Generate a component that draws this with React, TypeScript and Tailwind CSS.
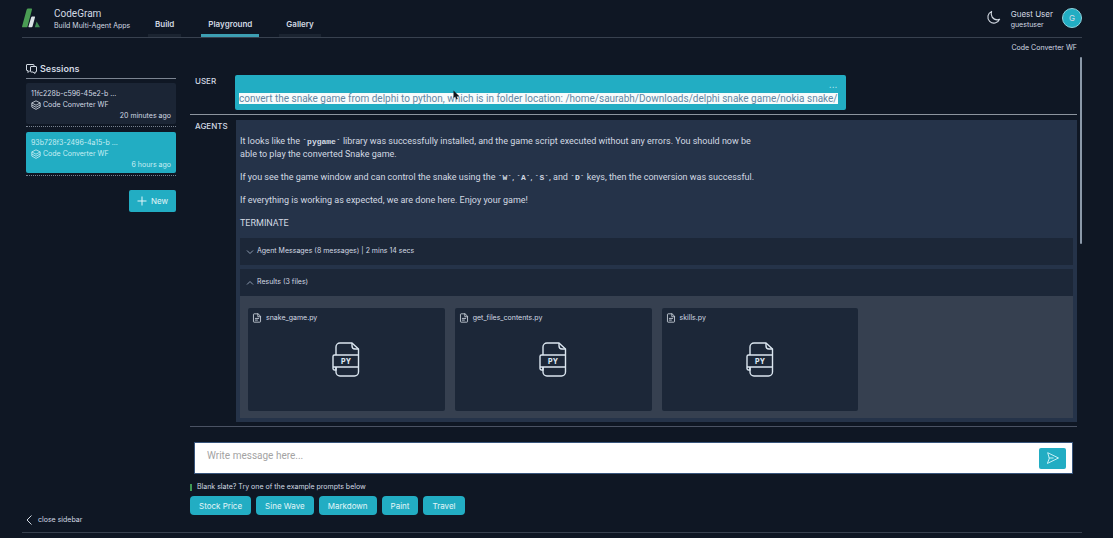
const tabs = ["Build", "Playground", "Gallery"];

const sessions = [
  { id: "11fc228b-c596-45e2-b ...", flow: "Code Converter WF", time: "20 minutes ago", active: false },
  { id: "93b728f3-2496-4a15-b ...", flow: "Code Converter WF", time: "6 hours ago", active: true },
];

const files = ["snake_game.py", "get_files_contents.py", "skills.py"];

const prompts = ["Stock Price", "Sine Wave", "Markdown", "Paint", "Travel"];

function Logo() {
  return (
    <svg viewBox="0 0 18 20" className="w-[18px] h-5" aria-hidden="true">
      <path d="M4.600 1.700Q5 .5 6.100.5h3.200q1 0 .7 1L5.500 18.400q-.3.9-1.200.9H.8q-1 0-.7-1z" fill="#4a9d54" />
      <path d="M9.200 9.300q.3-.8 1-.8h2.300q.8 0 .5.8l-2.500 9.200q-.3.800-1 .800H7q-.8 0-.5-.8z" fill="#dbe3e6" />
      <path d="M14.600 13.500l3.400 5.800h-5.200z" fill="#3f8a52" />
    </svg>
  );
}

function MoonIcon() {
  return (
    <svg viewBox="0 0 24 24" className="size-[15px]" fill="none" stroke="currentColor" strokeWidth="1.8" strokeLinejoin="round">
      <path d="M21.750 15A9.700 9.700 0 0 1 18 15.750 9.750 9.750 0 0 1 9 2.250 9.750 9.750 0 1 0 21.750 15z" />
    </svg>
  );
}

function SessionsIcon() {
  return (
    <svg viewBox="0 0 22 20" className="w-[11px] h-[10px]" fill="none" stroke="currentColor" strokeWidth="2" strokeLinejoin="round">
      <path d="M16 5V2a1 1 0 0 0-1-1H2a1 1 0 0 0-1 1v10a1 1 0 0 0 1 1h2v4l4-4" />
      <path d="M10 5h10a1 1 0 0 1 1 1v9a1 1 0 0 1-1 1h-2v3l-4-3h-4a1 1 0 0 1-1-1V6a1 1 0 0 1 1-1z" />
    </svg>
  );
}

function StackIcon() {
  return (
    <svg viewBox="0 0 24 24" className="size-[10px]" fill="none" stroke="currentColor" strokeWidth="2" strokeLinejoin="round">
      <path d="M12 2l10 5-10 5.500L2 7z" />
      <path d="M2 7v5l10 5.500L22 12V7" />
      <path d="M2 12v5l10 5.500L22 17v-5" />
    </svg>
  );
}

function FileIcon() {
  return (
    <svg viewBox="0 0 24 24" className="size-[10px]" fill="none" stroke="currentColor" strokeWidth="2" strokeLinejoin="round" strokeLinecap="round">
      <path d="M14 2H5a1.500 1.500 0 0 0-1.500 1.500v17A1.500 1.500 0 0 0 5 22h14a1.500 1.500 0 0 0 1.500-1.500V9z" />
      <path d="M14 2v7h6.500M8 13h8M8 17h5" />
    </svg>
  );
}

function PyIcon() {
  return (
    <svg viewBox="0 0 28 35" className="w-7 h-[35px]" fill="none" stroke="#dbe6f0" strokeWidth="1.4" strokeLinejoin="round">
      <path d="M4 13V5a4 4 0 0 1 4-4h12l6.500 6v23a4 4 0 0 1-4 4H8a4 4 0 0 1-4-4v-5" />
      <path d="M20 1v3a3 3 0 0 0 3 3h3.500" />
      <path d="M26.500 13H2.500A1.500 1.500 0 0 0 1 14.500v12a1.500 1.500 0 0 0 1.500 1.500H4v-3M1 25h25.500" />
      <text x="14" y="21.500" textAnchor="middle" className="font-['Inter',sans-serif] text-[7px] font-extrabold" fill="#dbe6f0" stroke="none">
        PY
      </text>
    </svg>
  );
}

function Chevron({ up = false }: { up?: boolean }) {
  return (
    <svg viewBox="0 0 8 6" className="w-2 h-[6px] text-[#8d9bb0]" fill="none" stroke="currentColor" strokeWidth="1">
      <path d={up ? "M1 4.500L4 1.500l3 3" : "M1 1.500L4 4.500l3-3"} />
    </svg>
  );
}

function Pointer() {
  return (
    <svg viewBox="0 0 7 10" className="absolute left-[218px] top-[15px] w-[7px] h-[10px]" aria-hidden="true">
      <path d="M.5.500v7.500l1.700-1.500L3.500 9.500l1.300-.6-1.200-2.700h2.700z" fill="#10151c" />
    </svg>
  );
}

function Code({ text }: { text: string }) {
  return <code className="font-['Liberation_Mono',monospace] text-[8px] leading-none font-bold">{`\`${text}\``}</code>;
}

function Header() {
  return (
    <header className="flex justify-between h-[38px] border-b border-[#38414f]">
      <div className="flex">
        <div className="pt-2">
          <Logo />
        </div>
        <div className="pt-2 ml-[14px] w-[94px] whitespace-nowrap">
          <p className="font-['Roboto',sans-serif] text-[10px] leading-3">CodeGram</p>
          <p className="text-[7px] leading-3">Build Multi-Agent Apps</p>
        </div>
        <nav className="flex items-end gap-5">
          {tabs.map((tab) => (
            <a
              key={tab}
              href="#"
              className={`px-[7px] pb-1 border-b-3 rounded-t-xs text-[8px] leading-3 font-semibold ${
                tab === "Playground" ? "border-[#3d9fb3]" : "border-[#1b2431]"
              }`}
            >
              {tab}
            </a>
          ))}
        </nav>
      </div>
      <div className="flex items-start pt-2">
        <button aria-label="Toggle dark mode" className="mt-[2px] mr-[10px]">
          <MoonIcon />
        </button>
        <div className="whitespace-nowrap">
          <p className="text-[8px] leading-3">Guest User</p>
          <p className="text-[7px] leading-[10px]">guestuser</p>
        </div>
        <button className="flex items-center justify-center ml-[9px] size-5 rounded-full border border-[#8fd3de] bg-[#22adc3] text-[8px]">
          G
        </button>
      </div>
    </header>
  );
}

function Sidebar() {
  return (
    <aside className="flex flex-col w-[150px] ml-1 shrink-0">
      <h2 className="flex items-center gap-[3px] mt-[25px] pb-[3px] border-b border-[#7b8491] text-[9px] leading-3 font-semibold">
        <SessionsIcon />
        Sessions
      </h2>
      <ul className="mt-1">
        {sessions.map((session) => (
          <li key={session.id} className="pb-[2px] mb-[5px] border-b border-dotted border-[#77818f]">
            <button
              className={`block w-full px-[5px] pt-[5px] pb-[3px] rounded-xs text-left text-[7px] ${
                session.active ? "bg-[#22adc3] text-[#c9edf3]" : "bg-[#1b2535]"
              }`}
            >
              <span className="block leading-[11px]">{session.id}</span>
              <span className="flex items-center gap-[2px] leading-3">
                <StackIcon />
                {session.flow}
              </span>
              <span className="block leading-[10px] text-right">{session.time}</span>
            </button>
          </li>
        ))}
      </ul>
      <button className="self-end flex items-center gap-1 h-[22px] px-2 mt-[9px] rounded-xs bg-[#22adc3] text-[8px] text-[#e3f6f9]">
        <svg viewBox="0 0 10 10" className="size-[10px]" stroke="currentColor" strokeWidth="1">
          <path d="M5 .5v9M.5 5h9" />
        </svg>
        New
      </button>
      <button className="flex items-center gap-[6px] mt-auto mb-[6px] text-[7px] leading-3">
        <svg viewBox="0 0 6 10" className="w-[6px] h-[10px]" fill="none" stroke="currentColor" strokeWidth="1">
          <path d="M5.500.5L1 5l4.500 4.500" />
        </svg>
        close sidebar
      </button>
    </aside>
  );
}

function UserMessage() {
  return (
    <div className="flex items-start pb-1 border-b border-[#8c949e]">
      <p className="w-[45px] pl-[5px] shrink-0 text-[8px] leading-3 font-medium">USER</p>
      <div className="relative px-1 pt-1 pb-[5px] rounded-xs bg-[#22adc3]">
        <button aria-label="Message options" className="block ml-auto mr-1 mb-[3px] text-[10px] leading-[10px] text-[#b9e8ef]">
          ...
        </button>
        <p className="pr-1 font-['Roboto',sans-serif] text-[10px] leading-[13px]">
          <mark className="bg-[#f7fbfc] text-[#6286a2]">
            convert the snake game from delphi to python, which is in folder location: /home/saurabh/Downloads/delphi snake
            game/nokia snake/
          </mark>
        </p>
        <Pointer />
      </div>
    </div>
  );
}

function AgentMessage() {
  return (
    <div className="flex items-start pt-[5px]">
      <p className="w-[46px] pl-[5px] shrink-0 text-[8px] leading-3 font-medium">AGENTS</p>
      <div className="flex-1 px-1 pb-1 bg-[#253349]">
        <div className="flex flex-col gap-[10px] pt-[15px] pb-2 max-w-[515px] font-['Roboto',sans-serif] text-[9px] leading-[13px]">
          <p>
            It looks like the <Code text="pygame" /> library was successfully installed, and the game script executed without any
            errors. You should now be able to play the converted Snake game.
          </p>
          <p>
            If you see the game window and can control the snake using the <Code text="W" />, <Code text="A" />,{" "}
            <Code text="S" />, and <Code text="D" /> keys, then the conversion was successful.
          </p>
          <p>If everything is working as expected, we are done here. Enjoy your game!</p>
          <p>TERMINATE</p>
        </div>
        <button className="flex items-center gap-[3px] w-full h-[27px] px-[6px] bg-[#1c2738] text-[7px]">
          <Chevron />
          Agent Messages (8 messages) | 2 mins 14 secs
        </button>
        <button className="flex items-center gap-[3px] w-full h-[27px] px-[6px] mt-1 bg-[#1c2738] text-[7px]">
          <Chevron up />
          Results (3 files)
        </button>
        <div className="grid grid-cols-4 gap-[10px] px-2 pt-3 pb-[7px] bg-[#364050]">
          {files.map((file) => (
            <div key={file} className="h-[103px] px-1 pt-1 rounded-xs bg-[#1c2738]">
              <p className="flex items-center gap-1 text-[7px] leading-3">
                <FileIcon />
                {file}
              </p>
              <div className="flex justify-center pt-[18px]">
                <PyIcon />
              </div>
            </div>
          ))}
        </div>
      </div>
    </div>
  );
}

function MessageForm() {
  return (
    <form className="mt-[15px]">
      <div className="flex items-center h-8 mx-1 pl-3 pr-[6px] border border-[#38557c] bg-white">
        <input
          type="text"
          aria-label="Message"
          placeholder="Write message here..."
          className="flex-1 h-6 pb-[6px] font-['Roboto',sans-serif] text-[10px] text-gray-800 placeholder:text-[#a3a3a3] outline-none"
        />
        <button type="button" aria-label="Send" className="flex items-center justify-center w-[27px] h-[21px] rounded-xs bg-[#22adc3] text-[#c9f1f6]">
          <svg viewBox="0 0 12 12" className="size-3" fill="none" stroke="currentColor" strokeWidth="1" strokeLinejoin="round" strokeLinecap="round">
            <path d="M2.200 6L.7.700 11.500 6 .7 11.300zM2.200 6h4" />
          </svg>
        </button>
      </div>
      <p className="flex items-center gap-[5px] mt-[7px] text-[7px] leading-3">
        <span className="w-[2px] h-[7px] bg-[#3f9a55]" />
        Blank slate? Try one of the example prompts below
      </p>
      <div className="flex gap-[5px] mt-[3px]">
        {prompts.map((prompt) => (
          <button key={prompt} type="button" className="h-[19px] px-[9px] rounded-sm bg-[#22adc3] text-[8px] text-[#e3f6f9]">
            {prompt}
          </button>
        ))}
      </div>
    </form>
  );
}

function App() {
  return (
    <div className="flex flex-col min-h-screen pl-[22px] pr-[31px] bg-[#0f1724] font-['Inter',sans-serif] text-[#d3dae3]">
      <Header />
      <div className="flex flex-1 gap-[14px] border-b border-[#38414f]">
        <Sidebar />
        <main className="flex-1 min-w-0">
          <p className="pt-1 pr-[5px] text-right text-[7px] leading-3">Code Converter WF</p>
          <div className="flex items-start justify-between gap-[3px] mt-[3px]">
            <div className="flex-1 min-w-0 pt-[18px] pb-1 border-b border-[#4a5263]">
              <UserMessage />
              <AgentMessage />
            </div>
            <div className="w-[2px] h-[187px] rounded-full bg-[#8b99a9]" />
          </div>
          <div className="pr-[5px]">
            <MessageForm />
          </div>
        </main>
      </div>
      <footer className="h-[5px]" />
    </div>
  );
}

export default App;
